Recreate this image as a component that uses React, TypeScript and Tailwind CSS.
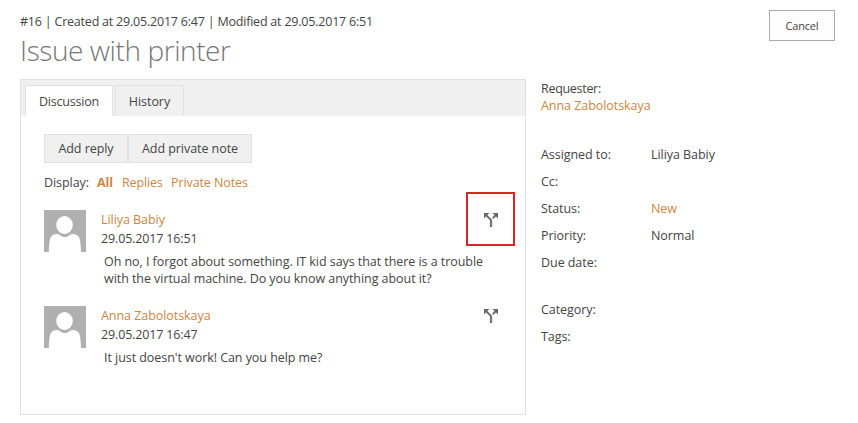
import type { ReactNode } from 'react';

function SplitIcon() {
  return (
    <svg viewBox="4 4 16 16" className="block size-3.5" fill="#666666" stroke="#666666" strokeWidth="0.35">
      <path d="M14 4l2.29 2.29-2.88 2.88 1.42 1.42 2.88-2.88L20 10V4zm-4 0H4v6l2.29-2.29 4.71 4.7V20h2v-8.41l-5.29-5.3z" />
    </svg>
  );
}

function Avatar() {
  return (
    <svg viewBox="0 0 42 42" className="block size-[42px] shrink-0">
      <rect width="42" height="42" fill="#b0b0b0" />
      <ellipse cx="20.5" cy="15" rx="8.3" ry="9" fill="#fff" />
      <path
        d="M4.8 42C5 36 5.3 31 6.3 28.2C7.5 25.2 10 24 13.2 24C15.5 24.2 17 27 20.8 27C24.6 27 26.2 24.2 28.5 24C31.7 24 34.2 25.2 35.5 28.2C36.6 31 36.8 36 37 42Z"
        fill="#fff"
      />
    </svg>
  );
}

type MessageProps = {
  author: ReactNode;
  date: string;
  highlighted?: boolean;
  children: ReactNode;
};

function Message({ author, date, highlighted, children }: MessageProps) {
  return (
    <article className="relative flex h-24">
      <Avatar />
      <div className="ml-[15px] min-w-0 flex-1">
        <div className="h-[19px] leading-[19px] text-[#cd853f]">{author}</div>
        <div className="h-[19px] leading-[19px] tracking-[-0.15px]">{date}</div>
        <div className="mt-[5px] ml-[3px] leading-[17px] whitespace-nowrap">{children}</div>
      </div>
      <button
        aria-label="Split"
        className={
          highlighted
            ? 'absolute -top-[18px] left-[422px] flex h-[54px] w-[49px] items-center justify-center border-2 border-[#d92525] pt-px pl-px'
            : 'absolute -top-[18px] left-[422px] flex h-[54px] w-[49px] items-center justify-center pt-px pl-px'
        }
      >
        <SplitIcon />
      </button>
    </article>
  );
}

function Field({ label, children }: { label: ReactNode; children?: ReactNode }) {
  return (
    <div className="flex h-[27px] leading-[27px]">
      <div className="w-[110px]">{label}</div>
      <div>{children}</div>
    </div>
  );
}

export default function App() {
  return (
    <div className="h-[423px] w-[858px] overflow-hidden bg-white font-['Open_Sans','Noto_Sans',sans-serif] text-[12.5px] tracking-[-0.055px] text-[#444444]">
      <header className="flex h-[79px] justify-between pr-[23px] pl-5">
        <div className="pt-3">
          <div className="h-[18px] leading-[19px] tracking-[-0.21px] whitespace-nowrap">
            #16 | Created at 29.05.2017 6:47 | Modified at 29.05.2017 6:51
          </div>
          <h1 className="h-10 text-[28px] leading-10 font-light tracking-[-0.42px] whitespace-nowrap text-[#777777]">
            Issue with printer
          </h1>
        </div>
        <button className="mt-2.5 h-[31px] w-[66px] border border-[#ababab] bg-[#fdfdfd] pt-0.5 text-[11px] tracking-[-0.2px]">
          Cancel
        </button>
      </header>

      <div className="flex">
        <main className="ml-5 h-[336px] w-[506px] border border-[#e1e1e1]">
          <nav className="flex h-9 gap-0.5 bg-[#f0f0f0] pt-[5px] pl-1">
            <div className="h-[31px] w-[88px] border border-b-0 border-[#e1e1e1] bg-white text-center leading-[31px] tracking-[-0.2px]">
              Discussion
            </div>
            <div className="h-[30px] w-[69px] border border-b-0 border-[#e1e1e1] text-center leading-[31px]">
              History
            </div>
          </nav>
          <div className="pt-[18px] pl-[23px]">
            <div className="flex">
              <button className="h-[29px] w-[84px] border border-[#e1e1e1] bg-[#f0f0f0] pt-0.5">Add reply</button>
              <button className="h-[29px] w-[124px] border border-[#e1e1e1] bg-[#f0f0f0] pt-0.5">
                Add private note
              </button>
            </div>
            <div className="mt-2.5 flex h-[19px] leading-[19px] whitespace-nowrap text-[#cd853f]">
              <span className="w-[53px] text-[#444444]">Display:</span>
              <span className="w-[25px] font-bold">All</span>
              <span className="w-[49px] tracking-[-0.15px]">Replies</span>
              <span className="tracking-[-0.1px]">Private Notes</span>
            </div>
            <div className="mt-[18px]">
              <Message author="Liliya Babiy" date="29.05.2017 16:51" highlighted>
                <p>Oh no, I forgot about something. IT kid says that there is a trouble</p>
                <p>with the virtual machine. Do you know anything about it?</p>
              </Message>
              <Message author="Anna Zabolotskaya" date="29.05.2017 16:47">
                <p>It just doesn't work! Can you help me?</p>
              </Message>
            </div>
          </div>
        </main>

        <aside className="ml-[15px] w-[300px]">
          <div className="pt-px leading-[17px]">
            <div className="tracking-[-0.3px]">Requester:</div>
            <div className="text-[#cd853f]">Anna Zabolotskaya</div>
          </div>
          <div className="mt-[27px]">
            <Field label="Assigned to:">Liliya Babiy</Field>
            <Field label="Cc:" />
            <Field label="Status:">
              <span className="text-[#cd853f]">New</span>
            </Field>
            <Field label="Priority:">Normal</Field>
            <Field label="Due date:" />
          </div>
          <div className="mt-5">
            <Field label="Category:" />
            <Field label="Tags:" />
          </div>
        </aside>
      </div>
    </div>
  );
}
